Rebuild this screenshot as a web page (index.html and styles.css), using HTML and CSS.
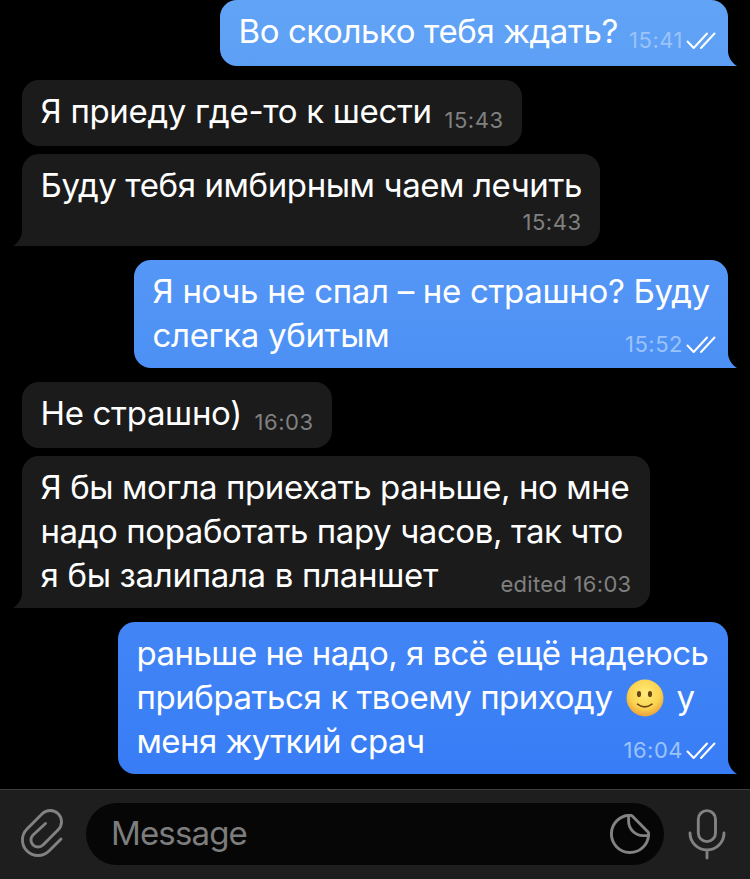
FILE: index.html
```html
<!DOCTYPE html>
<html lang="ru">
<head>
    <meta charset="UTF-8">
    <meta name="viewport" content="width=device-width, initial-scale=1.0">
    <title>Chat</title>
    <link rel="stylesheet" href="styles.css">
</head>
<body>
    <main class="chat">
        <div class="message out first tail">
            <div class="row">
                <p class="line tight">Во сколько тебя ждать?</p>
                <div class="meta"><time>15:41</time><svg class="checks" viewBox="0 0 30 18"><path d="M1.5 9.5L7.7 16 21 1.5M15 16L28.5 1.5"/></svg></div>
            </div>
        </div>
        <div class="message in second">
            <div class="row">
                <p class="line">Я приеду где-то к шести</p>
                <div class="meta"><time>15:43</time></div>
            </div>
        </div>
        <div class="message in third tail next">
            <p class="line tight">Буду тебя имбирным чаем лечить</p>
            <div class="meta below"><time>15:43</time></div>
        </div>
        <div class="message out fourth tail">
            <p class="line">Я ночь не спал – не страшно? Буду</p>
            <div class="row">
                <p class="line">слегка убитым</p>
                <div class="meta"><time>15:52</time><svg class="checks" viewBox="0 0 30 18"><path d="M1.5 9.5L7.7 16 21 1.5M15 16L28.5 1.5"/></svg></div>
            </div>
        </div>
        <div class="message in fifth">
            <div class="row">
                <p class="line">Не страшно)</p>
                <div class="meta"><time>16:03</time></div>
            </div>
        </div>
        <div class="message in sixth tail next">
            <p class="line tight">Я бы могла приехать раньше, но мне</p>
            <p class="line tight">надо поработать пару часов, так что</p>
            <div class="row">
                <p class="line">я бы залипала в планшет</p>
                <div class="meta edited"><time>edited 16:03</time></div>
            </div>
        </div>
        <div class="message out seventh tail">
            <p class="line tighter">раньше не надо, я всё ещё надеюсь</p>
            <p class="line with-smile">
                <span>прибраться к твоему приходу</span>
                <svg class="smile" viewBox="0 0 38 38">
                    <defs>
                        <radialGradient id="face" cx="50%" cy="38%" r="62%">
                            <stop offset="0" stop-color="#ffec7a"/>
                            <stop offset="0.65" stop-color="#fbd34f"/>
                            <stop offset="1" stop-color="#e9a03a"/>
                        </radialGradient>
                    </defs>
                    <circle cx="19" cy="19" r="18.5" fill="url(#face)"/>
                    <ellipse cx="13" cy="15" rx="2.1" ry="3.1" fill="#6b4414"/>
                    <ellipse cx="24" cy="15" rx="2.1" ry="3.1" fill="#6b4414"/>
                    <path d="M11.5 25.2Q18.7 30.6 26 25.2" fill="none" stroke="#6b4414" stroke-width="1.6" stroke-linecap="round"/>
                </svg>
                <span>у</span>
            </p>
            <div class="row">
                <p class="line tighter">меня жуткий срач</p>
                <div class="meta"><time>16:04</time><svg class="checks" viewBox="0 0 30 18"><path d="M1.5 9.5L7.7 16 21 1.5M15 16L28.5 1.5"/></svg></div>
            </div>
        </div>
    </main>
    <footer class="composer">
        <svg class="icon clip" viewBox="20 28 44 50"><path d="M61 59L49 71A15.5 15.5 0 0 1 27 49L42.2 33.8A11.3 11.3 0 0 1 58.2 49.8L43 65A7.07 7.07 0 0 1 33 55L45.5 43.5"/></svg>
        <div class="field">
            <span class="placeholder">Message</span>
            <svg class="icon sticker" viewBox="0 0 40 40"><path d="M20.5 1.3A18.6 18.6 0 1 0 38.6 20.5Q39 19 37.8 17.8L22.5 2.3Q21.5 1.3 20.5 1.3H18.6V7C18.6 15 25 21.6 33 21.6H38"/></svg>
        </div>
        <svg class="icon mic" viewBox="0 0 38 52"><rect x="10.3" y="2.6" width="17.2" height="31" rx="8.6"/><path d="M2 25A17 17 0 0 0 36 25M19 42V50"/></svg>
    </footer>
</body>
</html>
```
FILE: styles.css
```css
body {
    margin: 0;
    background-color: #000;
    color: #fff;
    font-family: Inter, "Noto Sans", sans-serif;
    font-size: 33px;
    line-height: 44px;
    height: 879px;
    display: flex;
    flex-direction: column;
    overflow: hidden;
}
.chat {
    flex: 1;
    display: flex;
    flex-direction: column;
    padding: 0 22px;
}
.message {
    position: relative;
    box-sizing: border-box;
    margin-bottom: 14px;
    padding: 9px 18.5px 11px;
    border-radius: 17px;
}
.in {
    align-self: flex-start;
    background: #1b1b1b;
}
.out {
    align-self: flex-end;
    padding-right: 12px;
}
.in.tail {
    border-bottom-left-radius: 0;
}
.out.tail {
    border-bottom-right-radius: 0;
}
.next {
    margin-top: -6px;
}

/* bubble sizes and colours */
.first {
    width: 508px;
    height: 66px;
    background: linear-gradient(#61a4f6, #5c9ff5);
    --tail: #5c9ff5;
}
.second {
    width: 500px;
    height: 66px;
}
.third {
    width: 578px;
    height: 92px;
}
.fourth {
    width: 594px;
    height: 108px;
    background: linear-gradient(#5597f6, #4c90f5);
    --tail: #4c90f5;
}
.fifth {
    width: 310px;
    height: 66px;
}
.sixth {
    width: 628px;
    height: 152px;
}
.seventh {
    width: 610px;
    height: 152px;
    background: linear-gradient(#4285f6, #387df6);
    --tail: #387df6;
}

/* tails */
.tail::after {
    content: "";
    position: absolute;
    bottom: 0;
    width: 9px;
    height: 15px;
}
.out.tail::after {
    left: 100%;
    background: var(--tail);
    clip-path: path("M0 0C0 6 4 12 9 15H0Z");
}
.in.tail::after {
    right: 100%;
    background: #1b1b1b;
    clip-path: path("M9 0C9 6 5 12 0 15H9Z");
}

.row {
    display: flex;
    justify-content: space-between;
    align-items: flex-end;
}
.line {
    margin: 0;
    white-space: nowrap;
    letter-spacing: -0.32px;
}
.tight {
    letter-spacing: -0.41px;
}
.tighter {
    letter-spacing: -0.54px;
}
.with-smile {
    display: flex;
    align-items: center;
    letter-spacing: -0.44px;
}
.smile {
    width: 38px;
    height: 38px;
    margin: 2px 12.5px 0 13.5px;
}
.meta {
    display: flex;
    align-items: flex-end;
    margin-bottom: 1px;
    font-size: 22px;
    line-height: 24px;
    letter-spacing: 0.5px;
    color: #808080;
}
.out .meta {
    color: #9bc3fa;
}
.below {
    justify-content: flex-end;
    padding-top: 3px;
}
.edited {
    letter-spacing: 0.3px;
}
.checks {
    width: 30px;
    height: 18px;
    margin: 0 0 2px 3px;
    fill: none;
    stroke: #fff;
    stroke-width: 2;
    stroke-linecap: round;
    stroke-linejoin: round;
}

.composer {
    box-sizing: border-box;
    height: 90px;
    display: flex;
    align-items: center;
    padding: 0 24px 2px 20px;
    background: #1e1e1e;
    border-top: 1px solid #3c3c3c;
}
.icon {
    flex: none;
    fill: none;
    stroke: #828282;
    stroke-width: 2.9;
    stroke-linecap: round;
    stroke-linejoin: round;
}
.clip {
    width: 44px;
    height: 50px;
    margin-right: 22px;
    margin-bottom: 2px;
}
.field {
    box-sizing: border-box;
    width: 578px;
    height: 62px;
    display: flex;
    align-items: center;
    justify-content: space-between;
    padding: 0 14px 0 25px;
    border-radius: 31px;
    background: #060606;
}
.placeholder {
    color: #7d7d7d;
    letter-spacing: -0.85px;
    padding-bottom: 1px;
}
.sticker {
    width: 40px;
    height: 40px;
}
.mic {
    width: 38px;
    height: 52px;
    margin-left: 24px;
}
```
